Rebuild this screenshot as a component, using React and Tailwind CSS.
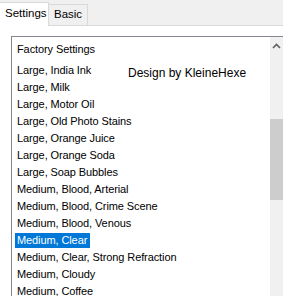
export default function App() {
  const rows = [
    "Large, India Ink",
    "Large, Milk",
    "Large, Motor Oil",
    "Large, Old Photo Stains",
    "Large, Orange Juice",
    "Large, Orange Soda",
    "Large, Soap Bubbles",
    "Medium, Blood, Arterial",
    "Medium, Blood, Crime Scene",
    "Medium, Blood, Venous",
    "Medium, Clear",
    "Medium, Clear, Strong Refraction",
    "Medium, Cloudy",
    "Medium, Coffee",
  ];
  return (
    <div
      className="relative w-[283px] h-[296px] overflow-hidden bg-white text-[#000] flex flex-col"
      style={{ fontFamily: '"Liberation Sans", Arial, sans-serif' }}
    >
      <div className="flex items-end h-[26px] bg-[#f0f0f0] shrink-0">
        <div className="h-[24px] w-[49px] bg-white border-t border-r border-[#d9d9d9] flex items-center pl-[5px] pb-[1px] text-[11.5px] leading-none">
          Settings
        </div>
        <div className="h-[22px] w-[39px] bg-[#f0f0f0] border-t border-r border-b border-[#d9d9d9] flex items-center pl-[5px] text-[11.5px] leading-none">
          Basic
        </div>
        <div className="flex-1 h-[1px] bg-[#d9d9d9]" />
      </div>
      <div className="flex-1 pl-[11px] pt-[10px] flex">
        <div className="flex-1 flex border-l border-t border-[#828790]">
          <div className="flex-1 pt-[4px] text-[11px] leading-none tracking-[-0.1px]">
            <div className="h-[17px] flex items-center pl-[5px]">Factory Settings</div>
            <div className="h-[4px]" />
            {rows.map((r) => (
              <div key={r} className="h-[17px] flex items-center pl-[3px] whitespace-nowrap">
                {r === "Medium, Clear" ? (
                  <span className="h-[15px] flex items-center px-[2px] pr-[3px] bg-[#0078d7] text-white">{r}</span>
                ) : (
                  <span className="px-[2px]">{r}</span>
                )}
              </div>
            ))}
          </div>
          <div className="w-[13px] bg-[#f0f0f0] flex flex-col items-center">
            <svg width="9" height="6" viewBox="0 0 9 6" className="mt-[6px]">
              <path d="M1 5 L4.5 1.5 L8 5" fill="none" stroke="#606060" strokeWidth="1.6" />
            </svg>
            <div className="mt-[70px] w-[13px] h-[81px] bg-[#cdcdcd]" />
          </div>
        </div>
      </div>
      <div className="absolute left-[128px] top-[66px] text-[12px] leading-[14px] whitespace-nowrap">
        Design by KleineHexe
      </div>
    </div>
  );
}
